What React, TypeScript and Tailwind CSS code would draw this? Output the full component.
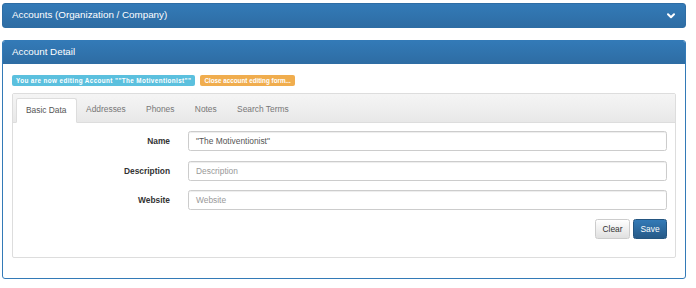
import React from "react";

function Chevron() {
  return (
    <svg width="8" height="6" viewBox="0 0 8 6" className="block">
      <polyline points="1,1.2 4,4.2 7,1.2" fill="none" stroke="#ffffff" strokeWidth="2" strokeLinecap="round" strokeLinejoin="round" />
    </svg>
  );
}

const tabs = ["Basic Data", "Addresses", "Phones", "Notes", "Search Terms"];

function Row({ label, value, placeholder, cls }: { label: string; value?: string; placeholder: string; cls?: string }) {
  return (
    <div className={"flex items-center " + (cls ?? "")}>
      <div className="w-[148px] text-right text-[8.4px] font-bold text-[#333]">{label}</div>
      <div className="ml-[18px] flex-1">
        <div className="h-[20px] rounded-[2.5px] border border-[#cccccc] bg-white px-[7px] flex items-center text-[8.4px] shadow-[inset_0_1px_1px_rgba(0,0,0,0.075)]">
          {value ? <span className="text-[#555]">{value}</span> : <span className="text-[#999]">{placeholder}</span>}
        </div>
      </div>
    </div>
  );
}

export default function App() {
  return (
    <div className="w-[696px] h-[288px] bg-white overflow-hidden" style={{ fontFamily: '"Liberation Sans", Arial, sans-serif' }}>
      <div className="pt-[3px] pl-[2px] pr-[10px]">
        {/* Panel 1 */}
        <div className="h-[25px] rounded-[3px] border border-[#2e6da4] bg-gradient-to-b from-[#337ab7] to-[#2e6da4] flex items-center justify-between pl-[9px] pr-[10px] text-white text-[9.8px]">
          <span>Accounts (Organization / Company)</span>
          <Chevron />
        </div>

        {/* Panel 2 */}
        <div className="mt-[12px] rounded-[3px] border border-[#337ab7] h-[239px] flex flex-col">
          <div className="h-[23px] shrink-0 bg-gradient-to-b from-[#337ab7] to-[#2e6da4] border-b border-[#2e6da4] flex items-center pl-[9px] text-white text-[9.8px] rounded-t-[2px]">
            Account Detail
          </div>
          <div className="px-[9px] pt-[11px]">
            <div className="flex gap-[5px]">
              <span className="h-[11px] px-[4px] rounded-[2px] bg-[#5bc0de] text-white font-bold text-[6.3px] tracking-[0.4px] flex items-center">You are now editing Account ""The Motiventionist""</span>
              <span className="h-[11px] px-[4px] rounded-[2px] bg-[#f0ad4e] text-white font-bold text-[6.3px] flex items-center">Close account editing form...</span>
            </div>
            <div className="mt-[7px] border border-[#dddddd] rounded-[2px] h-[165px] flex flex-col">
              <div className="h-[29px] shrink-0 bg-gradient-to-b from-[#f5f5f5] to-[#e8e8e8] border-b border-[#dddddd] flex items-end pl-[3px]">
                {tabs.map((t, i) =>
                  i === 0 ? (
                    <div key={t} className="h-[25px] -mb-px bg-white border border-[#dddddd] border-b-white rounded-t-[2.5px] px-[9px] flex items-center text-[8.4px] text-[#555]">
                      {t}
                    </div>
                  ) : (
                    <div key={t} className="h-[25px] px-[9.6px] flex items-center text-[8.4px] text-[#777] mr-[1.2px]">
                      {t}
                    </div>
                  )
                )}
              </div>
              <div className="pl-[9px] pr-[8px] pt-[8px]">
                <Row label="Name" value={'"The Motiventionist"'} placeholder="Name" />
                <Row label="Description" placeholder="Description" cls="mt-[10px]" />
                <Row label="Website" placeholder="Website" cls="mt-[9px]" />
                <div className="mt-[9px] flex justify-end gap-[3px]">
                  <div className="h-[20px] w-[35px] rounded-[2.5px] border border-[#cccccc] bg-gradient-to-b from-white to-[#e0e0e0] text-[#333] text-[8.4px] flex items-center justify-center">Clear</div>
                  <div className="h-[20px] w-[34px] rounded-[2.5px] border border-[#245580] bg-gradient-to-b from-[#337ab7] to-[#265a88] text-white text-[8.4px] flex items-center justify-center">Save</div>
                </div>
              </div>
            </div>
          </div>
        </div>
      </div>
    </div>
  );
}
